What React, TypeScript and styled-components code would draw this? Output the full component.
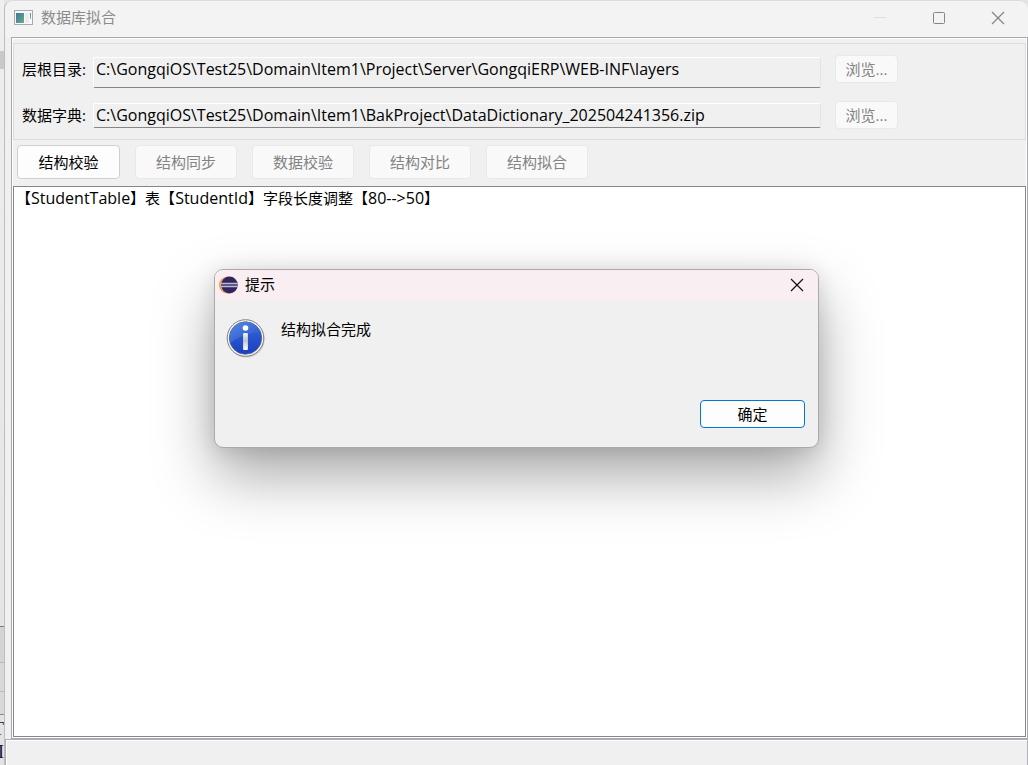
import React from 'react';
import styled, { createGlobalStyle } from 'styled-components';

const Global = createGlobalStyle`
  * { box-sizing: border-box; }
  html, body { margin: 0; height: 100%; overflow: hidden; }
  #root { height: 100%; }
  body, button, input {
    font-family: "Open Sans", "Noto Sans CJK SC", sans-serif;
    font-size: 15px;
    line-height: 20px;
    color: #000;
  }
`;

const Desktop = styled.div`
  display: flex;
  height: 100vh;
  background: #e4e4e4;
`;

const BackWindow = styled.aside`
  display: flex;
  flex-direction: column;
  flex: none;
  width: 4px;
  overflow: hidden;
  background: linear-gradient(#efefef, #e2e2e2);
`;

const BackPane = styled.div<{ $h?: number; $bg?: string; $line?: string }>`
  flex: ${p => (p.$h ? `0 0 ${p.$h}px` : '1 1 0')};
  background: ${p => p.$bg ?? 'transparent'};
  border-bottom: ${p => (p.$line ? `1px solid ${p.$line}` : 'none')};
`;

const BackText = styled.div`
  flex: none;
  display: flex;
  flex-direction: column;
  align-items: flex-end;
  height: 50px;
  padding-top: 3px;
  font-family: "Liberation Serif", serif;
  font-size: 18px;
  line-height: 23px;
  color: #1a1030;
`;

const Window = styled.main`
  position: relative;
  flex: 1;
  min-width: 0;
  display: flex;
  flex-direction: column;
  padding-left: 6px;
  border-left: 1px solid #bdbdbd;
  border-top: 1px solid #dcdcdc;
  border-radius: 9px 9px 0 0;
  background: #f0f0f0;
`;

const TitleBar = styled.header`
  flex: none;
  display: flex;
  align-items: center;
  height: 36px;
  margin-left: -6px;
  padding: 0 1px 2px 9px;
  border-radius: 9px 9px 0 0;
  background: #f3f3f3;
`;

const Title = styled.h1`
  flex: 1;
  margin: 0 0 2px 7px;
  font-size: 15px;
  font-weight: 400;
  color: #8c8c8c;
`;

const CaptionButton = styled.button`
  display: flex;
  align-items: center;
  justify-content: center;
  width: 59px;
  height: 32px;
  padding: 0;
  border: 0;
  background: transparent;
`;

const Frame = styled.section`
  flex: 1;
  min-height: 0;
  display: flex;
  flex-direction: column;
  padding: 4px 0 0;
  border: 1px solid #a9a9ad;
  box-shadow: inset 0 0 0 1px #fff;
`;

const Group = styled.form`
  flex: none;
  display: flex;
  flex-direction: column;
  gap: 18px;
  height: 97px;
  margin: 1px 1px 0;
  padding: 11px 8px 0;
  border: 1px solid #dcdcdc;
`;

const Field = styled.div`
  display: flex;
  align-items: flex-start;
  height: 28px;
`;

const Label = styled.label`
  flex: none;
  width: 71px;
  padding-top: 4px;
  white-space: nowrap;
`;

const PathInput = styled.input<{ $tall?: boolean }>`
  flex: 0 1 728px;
  min-width: 0;
  height: ${p => (p.$tall ? 31 : 25)}px;
  margin-top: 2px;
  padding: ${p => (p.$tall ? '0 2px 8px' : '0 2px 2px')};
  border: 1px solid #e3e3e3;
  border-top-color: #fff;
  border-left-color: #fff;
  border-bottom-color: #868686;
  border-radius: 2px;
  background: #f0f0f0;
  font-size: 16px;
  outline: 0;
`;

const PushButton = styled.button`
  flex: none;
  width: 103px;
  height: 34px;
  padding: 0;
  border: 1px solid #d0d0d0;
  border-radius: 4px;
  background: #fdfdfd;
  &:disabled {
    width: 102px;
    border-color: #e9e9e9;
    background: #f9f9f9;
    color: #838383;
  }
`;

const BrowseButton = styled(PushButton)`
  height: 28px;
  margin-left: 14px;
  &:disabled {
    width: 63px;
  }
`;

const Toolbar = styled.nav`
  flex: none;
  display: flex;
  gap: 15px;
  padding: 5px 5px 7px;
`;

const Log = styled.div`
  flex: 1;
  min-height: 0;
  margin: 0 1px 1px;
  padding: 1px 2px;
  border: 1px solid #828790;
  background: #fff;
  overflow: hidden;
`;

const LogLine = styled.p`
  margin: 0;
`;

const Latin = styled.span`
  font-size: 16px;
`;

const StatusBar = styled.footer`
  flex: none;
  height: 26px;
  margin-left: -6px;
  border: 1px solid #b0b0b8;
  border-bottom: 0;
  box-shadow: inset 1px 1px 0 #fff;
`;

const Dialog = styled.section`
  position: absolute;
  top: 268px;
  left: 0;
  right: 0;
  margin: 0 auto;
  display: flex;
  flex-direction: column;
  width: 605px;
  border: 1px solid #aaa;
  border-radius: 9px;
  background: #f0f0f0;
  box-shadow: 0 28px 60px rgba(0, 0, 0, 0.34), 0 2px 20px rgba(0, 0, 0, 0.12);
`;

const DialogTitleBar = styled.header`
  display: flex;
  align-items: center;
  height: 31px;
  padding: 0 0 1px 4px;
  border-radius: 8px 8px 0 0;
  background: #f9eff2;
`;

const DialogTitle = styled.h2`
  flex: 1;
  margin: 0 0 2px 6px;
  font-size: 15px;
  font-weight: 400;
`;

const CloseButton = styled(CaptionButton)`
  width: 42px;
  height: 30px;
`;

const Message = styled.div`
  display: flex;
  gap: 15px;
  height: 99px;
  padding: 17px 11px;
`;

const MessageText = styled.p`
  margin: 1px 0 0;
`;

const DialogActions = styled.div`
  display: flex;
  justify-content: flex-end;
  padding: 0 13px 19px;
`;

const OkButton = styled(PushButton)`
  width: 105px;
  height: 28px;
  border-color: #0078d4;
`;

const Cross = ({ color }: { color: string }) => (
  <svg width="14" height="14" viewBox="0 0 14 14" stroke={color} strokeWidth="1.2" aria-hidden="true">
    <path d="M1 1L13 13M13 1L1 13" />
  </svg>
);

const AppIcon = () => (
  <svg width="20" height="16" viewBox="0 0 20 16" aria-hidden="true">
    <defs>
      <linearGradient id="pane" x1="0" y1="0" x2="1" y2="1">
        <stop offset="0" stopColor="#4574a0" />
        <stop offset="1" stopColor="#65ad83" />
      </linearGradient>
      <linearGradient id="bar" x1="0" y1="0" x2="0" y2="1">
        <stop offset="0" stopColor="#4c80a8" />
        <stop offset="1" stopColor="#8cc49c" />
      </linearGradient>
    </defs>
    <rect x=".5" y=".5" width="18" height="14" fill="#f8f8f8" stroke="#a5abb2" />
    <rect x="2" y="3" width="8" height="10" fill="url(#pane)" />
    <rect x="11" y="3" width="4" height="10" fill="#ececec" />
    <rect x="16" y="3" width="1" height="6" fill="url(#bar)" />
  </svg>
);

const EclipseIcon = () => (
  <svg width="20" height="20" viewBox="0 0 20 20" aria-hidden="true">
    <circle cx="8.6" cy="10" r="8.6" fill="#f39a3d" />
    <circle cx="10" cy="10" r="8.4" fill="#fbe9dd" />
    <circle cx="10.4" cy="10" r="8.4" fill="#33265f" />
    <path d="M2 8.5H18.8M2 11.5H18.8" stroke="#b9bad4" strokeWidth="1.6" />
    <path d="M2 10H18.8" stroke="#6c6795" strokeWidth="1" />
  </svg>
);

const InfoIcon = () => (
  <svg width="40" height="42" viewBox="0.5 0 40 42" aria-hidden="true">
    <defs>
      <linearGradient id="ball" x1="0" y1="0" x2="0" y2="1">
        <stop offset="0" stopColor="#3468d8" />
        <stop offset="1" stopColor="#1b3fc0" />
      </linearGradient>
      <linearGradient id="gloss" x1="0" y1="0" x2="1" y2="1">
        <stop offset="0" stopColor="#6a98ee" />
        <stop offset="1" stopColor="#2050c4" />
      </linearGradient>
      <linearGradient id="stem" x1="0" y1="0" x2="0" y2="1">
        <stop offset="0" stopColor="#f4f4f4" />
        <stop offset=".45" stopColor="#c2c5ca" />
        <stop offset="1" stopColor="#fff" />
      </linearGradient>
    </defs>
    <circle cx="20.8" cy="21.2" r="18.4" fill="#b4b4b4" opacity=".6" />
    <circle cx="20" cy="20" r="18.3" fill="#f4f4f4" stroke="#7f8287" />
    <circle cx="20" cy="20" r="16.2" fill="url(#ball)" stroke="#4d5f8c" strokeWidth=".8" />
    <path d="M4 21C4 11 11 4 20 4c7 0 13 4 15 10C27 15 14 17 5 25Z" fill="url(#gloss)" opacity=".7" />
    <circle cx="20" cy="10" r="2.8" fill="#fff" />
    <rect x="17.6" y="15" width="4.8" height="17" rx="1" fill="url(#stem)" />
  </svg>
);

const actions = [
  { label: '结构校验', enabled: true },
  { label: '结构同步', enabled: false },
  { label: '数据校验', enabled: false },
  { label: '结构对比', enabled: false },
  { label: '结构拟合', enabled: false },
];

const fields = [
  { id: 'layers', label: '层根目录:', value: 'C:\\GongqiOS\\Test25\\Domain\\Item1\\Project\\Server\\GongqiERP\\WEB-INF\\layers', tall: true },
  { id: 'dictionary', label: '数据字典:', value: 'C:\\GongqiOS\\Test25\\Domain\\Item1\\BakProject\\DataDictionary_202504241356.zip', tall: false },
];

export default function App() {
  return (
    <Desktop>
      <Global />
      <BackWindow aria-hidden="true">
        <BackPane $h={51} />
        <BackPane $h={18} $bg="#c9c9c9" />
        <BackPane $line="#7d7d82" />
        <BackPane $h={36} $bg="#d4d4d4" $line="#bcbcbc" />
        <BackPane $h={29} $bg="#d8d8d8" $line="#bcbcbc" />
        <BackPane $h={23} $bg="#d8d8d8" $line="#8a8a8a" />
        <BackText><span>T</span><span>I</span></BackText>
      </BackWindow>
      <Window>
        <TitleBar>
          <AppIcon />
          <Title>数据库拟合</Title>
          <CaptionButton aria-label="最小化">
            <svg width="12" height="12" viewBox="0 0 12 12" aria-hidden="true"><path d="M0 5.5H12" stroke="#dedede" /></svg>
          </CaptionButton>
          <CaptionButton aria-label="最大化">
            <svg width="12" height="12" viewBox="0 0 12 12" aria-hidden="true"><rect x=".5" y=".5" width="11" height="11" rx="1" fill="none" stroke="#858585" /></svg>
          </CaptionButton>
          <CaptionButton aria-label="关闭"><Cross color="#858585" /></CaptionButton>
        </TitleBar>
        <Frame>
          <Group onSubmit={e => e.preventDefault()}>
            {fields.map(f => (
              <Field key={f.id}>
                <Label htmlFor={f.id}>{f.label}</Label>
                <PathInput id={f.id} $tall={f.tall} defaultValue={f.value} readOnly />
                <BrowseButton type="button" disabled>浏览...</BrowseButton>
              </Field>
            ))}
          </Group>
          <Toolbar>
            {actions.map(a => (
              <PushButton key={a.label} disabled={!a.enabled}>{a.label}</PushButton>
            ))}
          </Toolbar>
          <Log role="log">
            <LogLine>
              【<Latin>StudentTable</Latin>】表【<Latin>StudentId</Latin>】字段长度调整【<Latin>{'80-->50'}</Latin>】
            </LogLine>
          </Log>
        </Frame>
        <StatusBar />
        <Dialog role="dialog" aria-labelledby="dialog-title">
          <DialogTitleBar>
            <EclipseIcon />
            <DialogTitle id="dialog-title">提示</DialogTitle>
            <CloseButton aria-label="关闭"><Cross color="#111" /></CloseButton>
          </DialogTitleBar>
          <Message>
            <InfoIcon />
            <MessageText>结构拟合完成</MessageText>
          </Message>
          <DialogActions>
            <OkButton>确定</OkButton>
          </DialogActions>
        </Dialog>
      </Window>
    </Desktop>
  );
}
